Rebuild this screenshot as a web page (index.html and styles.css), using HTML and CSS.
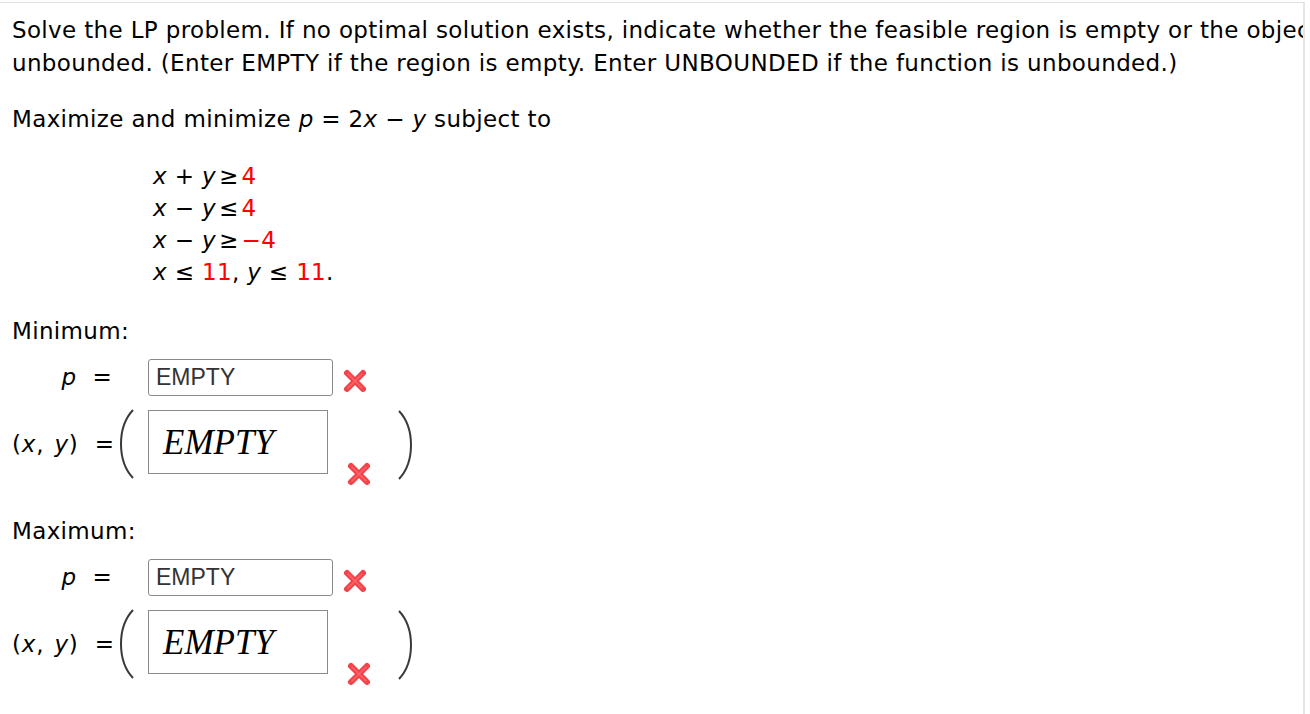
FILE: index.html
```html
<!DOCTYPE html>
<html>
<head>
<meta charset="utf-8">
<link rel="stylesheet" href="styles.css">
</head>
<body>
<div class="frame">
  <div class="content">
    <p class="intro">Solve the LP problem. If no optimal solution exists, indicate whether the feasible region is empty or the objective function is<br>unbounded. (Enter EMPTY if the region is empty. Enter UNBOUNDED if the function is unbounded.)</p>
    <p class="task">Maximize and minimize <i>p</i> = 2<i>x</i> &minus; <i>y</i> subject to</p>
    <div class="constraints">
      <div class="cline"><i>x</i> + <i>y</i><span class="rel">&ge;</span><span class="red">4</span></div>
      <div class="cline"><i>x</i> &minus; <i>y</i><span class="rel">&le;</span><span class="red">4</span></div>
      <div class="cline"><i>x</i> &minus; <i>y</i><span class="rel">&ge;</span><span class="red">&minus;4</span></div>
      <div class="cline"><i>x</i> &le; <span class="red">11</span>, <i>y</i> &le; <span class="red">11</span>.</div>
    </div>

    <div class="section">
      <div class="heading">Minimum:</div>
      <div class="row prow">
        <div class="lbl"><i>p</i><span class="eq">=</span></div>
        <div class="inbox">EMPTY</div>
        <svg class="xicon" viewBox="0 0 26 26"><path d="M5 5 L21 21 M21 5 L5 21" stroke="#f2434b" stroke-width="6" stroke-linecap="round"/><path d="M6 6 L20 20 M20 6 L6 20" stroke="#ff7a80" stroke-width="1.5" stroke-linecap="round" opacity="0.6"/></svg>
      </div>
      <div class="row xyrow">
        <div class="lbl"><span class="xy">(<i>x</i>, <i>y</i>)</span><span class="eq">=</span></div>
        <svg class="paren" viewBox="0 0 18 70"><path d="M16 1 C 0 18, 0 52, 16 69" fill="none" stroke="#3a3a3a" stroke-width="2"/></svg>
        <div class="bigbox">EMPTY</div>
        <svg class="xicon low" viewBox="0 0 26 26"><path d="M5 5 L21 21 M21 5 L5 21" stroke="#f2434b" stroke-width="6" stroke-linecap="round"/><path d="M6 6 L20 20 M20 6 L6 20" stroke="#ff7a80" stroke-width="1.5" stroke-linecap="round" opacity="0.6"/></svg>
        <svg class="paren right" viewBox="0 0 18 70"><path d="M2 1 C 18 18, 18 52, 2 69" fill="none" stroke="#3a3a3a" stroke-width="2"/></svg>
      </div>
    </div>

    <div class="section second">
      <div class="heading">Maximum:</div>
      <div class="row prow">
        <div class="lbl"><i>p</i><span class="eq">=</span></div>
        <div class="inbox">EMPTY</div>
        <svg class="xicon" viewBox="0 0 26 26"><path d="M5 5 L21 21 M21 5 L5 21" stroke="#f2434b" stroke-width="6" stroke-linecap="round"/><path d="M6 6 L20 20 M20 6 L6 20" stroke="#ff7a80" stroke-width="1.5" stroke-linecap="round" opacity="0.6"/></svg>
      </div>
      <div class="row xyrow">
        <div class="lbl"><span class="xy">(<i>x</i>, <i>y</i>)</span><span class="eq">=</span></div>
        <svg class="paren" viewBox="0 0 18 70"><path d="M16 1 C 0 18, 0 52, 16 69" fill="none" stroke="#3a3a3a" stroke-width="2"/></svg>
        <div class="bigbox">EMPTY</div>
        <svg class="xicon low" viewBox="0 0 26 26"><path d="M5 5 L21 21 M21 5 L5 21" stroke="#f2434b" stroke-width="6" stroke-linecap="round"/><path d="M6 6 L20 20 M20 6 L6 20" stroke="#ff7a80" stroke-width="1.5" stroke-linecap="round" opacity="0.6"/></svg>
        <svg class="paren right" viewBox="0 0 18 70"><path d="M2 1 C 18 18, 18 52, 2 69" fill="none" stroke="#3a3a3a" stroke-width="2"/></svg>
      </div>
    </div>
  </div>
</div>
</body>
</html>
```

FILE: styles.css
```css
html, body {
  margin: 0;
  padding: 0;
  background: #fff;
}
body {
  overflow: hidden;
}
.frame {
  margin-top: 2px;
  width: 1305px;
  height: 712px;
  border-top: 1px solid #e2e2e2;
  border-right: 2px solid #e6e6e6;
  overflow: hidden;
  box-sizing: border-box;
}
.content {
  padding: 11px 0 0 12px;
  font-family: "DejaVu Sans", Verdana, sans-serif;
  font-size: 23px;
  letter-spacing: 0.35px;
  color: #000;
  width: 1700px;
}
p {
  margin: 0;
}
.intro {
  line-height: 33px;
  white-space: nowrap;
}
.task {
  margin-top: 23px;
  line-height: 33px;
}
.constraints {
  padding-left: 141px;
  margin-top: 24px;
}
.cline {
  line-height: 32px;
}
.rel {
  margin: 0 3px 0 3px;
}
.red {
  color: #f00;
}
.section {
  margin-top: 27px;
}
.section.second {
  margin-top: 36px;
}
.heading {
  line-height: 33px;
}
.row {
  display: flex;
}
.prow {
  margin-top: 11px;
  height: 36px;
  align-items: center;
}
.xyrow {
  margin-top: 14px;
  height: 70px;
  align-items: flex-start;
}
.lbl {
  display: flex;
  align-items: center;
  box-sizing: border-box;
  white-space: nowrap;
  flex: none;
}
.prow .lbl {
  width: 136px;
  padding-right: 36px;
  justify-content: flex-end;
}
.xyrow .lbl {
  width: 105px;
  padding-right: 8px;
  height: 70px;
  justify-content: space-between;
}
.xy {
  word-spacing: 2px;
  letter-spacing: 0.8px;
}
.eq {
  margin-left: 16px;
}
.inbox {
  width: 185px;
  height: 37px;
  box-sizing: border-box;
  border: 1px solid #8a8a8a;
  border-radius: 3px;
  font-family: "Liberation Sans", Arial, sans-serif;
  font-size: 23px;
  letter-spacing: 0;
  color: #333;
  line-height: 35px;
  padding-left: 7px;
  flex: none;
}
.xicon {
  width: 26px;
  height: 26px;
  flex: none;
  filter: blur(0.35px);
}
.prow .xicon {
  margin-left: 9px;
  margin-top: 8px;
}
.xicon.low {
  margin-left: 18px;
  margin-top: 52px;
}
.paren {
  width: 18px;
  height: 70px;
  flex: none;
  margin-right: 13px;
}
.paren.right {
  margin-left: 25px;
  margin-right: 0;
  margin-top: 1px;
}
.bigbox {
  width: 180px;
  height: 64px;
  margin-top: 1px;
  box-sizing: border-box;
  border: 1px solid #8a8a8a;
  font-family: "Liberation Serif", "Times New Roman", serif;
  font-style: italic;
  font-size: 35px;
  letter-spacing: 0;
  color: #000;
  padding: 10px 0 0 14px;
  line-height: 44px;
  flex: none;
}
```
